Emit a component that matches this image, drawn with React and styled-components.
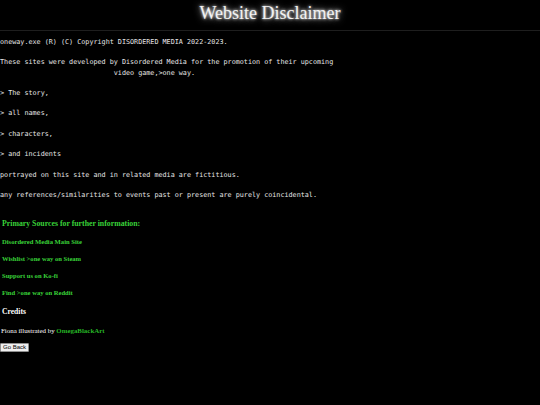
import React from 'react';
import styled, { createGlobalStyle } from 'styled-components';

const GlobalStyle = createGlobalStyle`
    html, body {
        margin: 0;
        padding: 0;
        background: #000;
    }
    body {
        font-family: "Liberation Serif", "Times New Roman", serif;
        color: #fff;
    }
`;

const Page = styled.div`
    width: 540px;
    min-height: 405px;
    background: #000;
    display: flex;
    flex-direction: column;
`;

const Header = styled.header`
    height: 30px;
    border-bottom: 1px solid #1e1e1e;
    display: flex;
    align-items: center;
    justify-content: center;
`;

const Title = styled.h1`
    margin: 0;
    margin-top: -3px;
    font-family: "Liberation Serif", serif;
    font-weight: 400;
    font-size: 18px;
    color: #f2f2f2;
    text-shadow: 0 0 3px #fff, 0 0 7px rgba(255, 255, 255, 0.8);
`;

const Terminal = styled.pre`
    margin: 6px 0 0 0;
    font-family: "DejaVu Sans Mono", monospace;
    font-size: 6.75px;
    line-height: 10.2px;
    color: #e6e6e6;
    white-space: pre;
`;

const Sources = styled.section`
    display: flex;
    flex-direction: column;
    gap: 7px;
    margin-top: 19px;
    padding-left: 2px;
`;

const SourcesHeading = styled.h3`
    margin: 0 0 1px 0;
    font-size: 7.8px;
    line-height: 10px;
    font-weight: 700;
    color: #39d239;
`;

const SourceLink = styled.a`
    display: block;
    font-size: 6.6px;
    line-height: 10px;
    font-weight: 700;
    color: #39d239;
    text-decoration: none;
`;

const Credits = styled.h3`
    margin: 9px 0 0 2px;
    font-size: 7.6px;
    line-height: 10px;
    font-weight: 700;
    color: #fff;
`;

const CreditLine = styled.p`
    margin: 9px 0 0 1px;
    font-size: 6.9px;
    font-weight: 400;
    line-height: 10px;
    color: #fff;
`;

const Artist = styled.a`
    font-weight: 700;
    color: #26b526;
    text-decoration: none;
`;

const BackButton = styled.button`
    align-self: flex-start;
    margin-top: 7px;
    height: 9px;
    padding: 0 2px;
    font-family: "Liberation Sans", Arial, sans-serif;
    font-size: 6px;
    line-height: 7px;
    color: #000;
    background: #efefef;
    border: 1px solid #8f8f8f;
    border-radius: 1px;
`;

const terminalText = `oneway.exe (R) (C) Copyright DISORDERED MEDIA 2022-2023.

These sites were developed by Disordered Media for the promotion of their upcoming
                            video game,>one way.

> The story,

> all names,

> characters,

> and incidents

portrayed on this site and in related media are fictitious.

any references/similarities to events past or present are purely coincidental.`;

const links = [
    'Disordered Media Main Site',
    'Wishlist >one way on Steam',
    'Support us on Ko-fi',
    'Find >one way on Reddit',
];

export default function App() {
    return (
        <Page>
            <GlobalStyle />
            <Header>
                <Title>Website Disclaimer</Title>
            </Header>

            <Terminal>{terminalText}</Terminal>

            <Sources>
                <SourcesHeading>Primary Sources for further information:</SourcesHeading>
                {links.map((l) => (
                    <SourceLink key={l}>{l}</SourceLink>
                ))}
            </Sources>

            <Credits>Credits</Credits>
            <CreditLine>
                Fiona illustrated by <Artist>OmegaBlackArt</Artist>
            </CreditLine>

            <BackButton>Go Back</BackButton>
        </Page>
    );
}
